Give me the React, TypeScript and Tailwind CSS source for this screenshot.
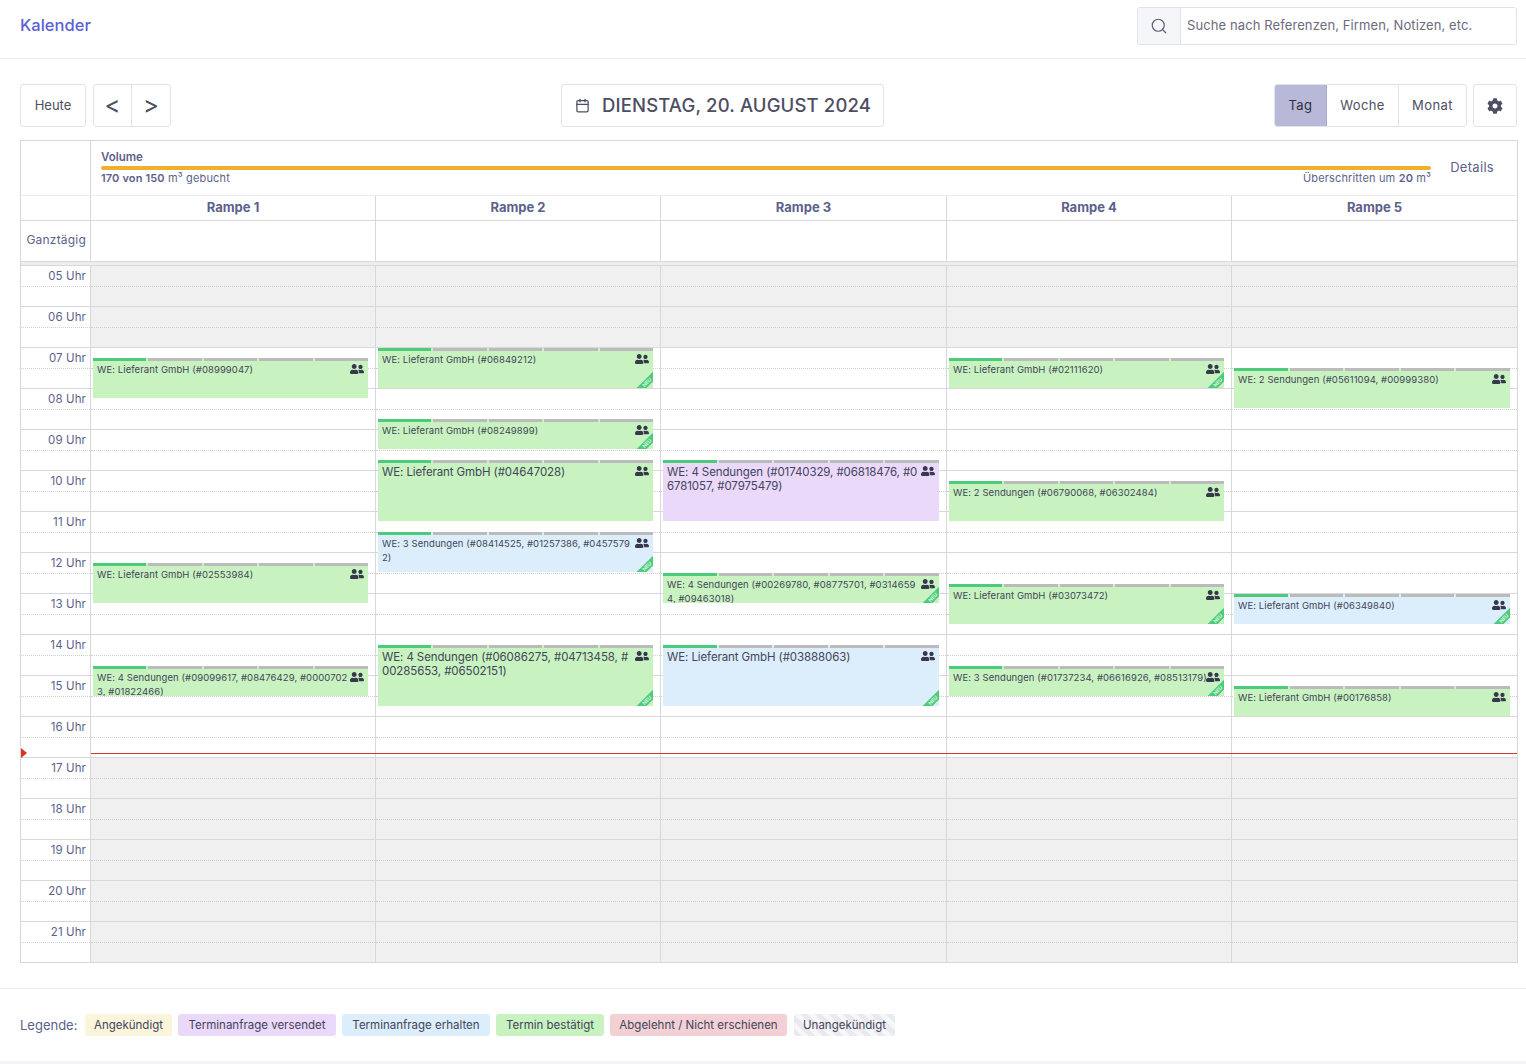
import React from 'react';
import { Calendar, Search } from 'lucide-react';
import { FaCog, FaUserFriends } from 'react-icons/fa';

type Appointment = {
    top: number;
    height: number;
    text: string;
    color: string;
    large?: boolean;
    neu?: boolean;
};

const GREEN = 'bg-[#c8f3c0]';
const BLUE = 'bg-[#dceefb]';
const PURPLE = 'bg-[#ead9fa]';

const columns: { name: string; items: Appointment[] }[] = [
    {
        name: 'Rampe 1',
        items: [
            { top: 358, height: 40, text: 'WE: Lieferant GmbH (#08999047)', color: GREEN },
            { top: 563, height: 40, text: 'WE: Lieferant GmbH (#02553984)', color: GREEN },
            { top: 666, height: 30, text: 'WE: 4 Sendungen (#09099617, #08476429, #0000702\n3, #01822466)', color: GREEN },
        ],
    },
    {
        name: 'Rampe 2',
        items: [
            { top: 348, height: 40, text: 'WE: Lieferant GmbH (#06849212)', color: GREEN, neu: true },
            { top: 419, height: 30, text: 'WE: Lieferant GmbH (#08249899)', color: GREEN, neu: true },
            { top: 460, height: 61, text: 'WE: Lieferant GmbH (#04647028)', color: GREEN, large: true },
            { top: 532, height: 40, text: 'WE: 3 Sendungen (#08414525, #01257386, #0457579\n2)', color: BLUE, neu: true },
            { top: 645, height: 61, text: 'WE: 4 Sendungen (#06086275, #04713458, #\n00285653, #06502151)', color: GREEN, large: true, neu: true },
        ],
    },
    {
        name: 'Rampe 3',
        items: [
            { top: 460, height: 61, text: 'WE: 4 Sendungen (#01740329, #06818476, #0\n6781057, #07975479)', color: PURPLE, large: true },
            { top: 573, height: 30, text: 'WE: 4 Sendungen (#00269780, #08775701, #0314659\n4, #09463018)', color: GREEN, neu: true },
            { top: 645, height: 61, text: 'WE: Lieferant GmbH (#03888063)', color: BLUE, large: true, neu: true },
        ],
    },
    {
        name: 'Rampe 4',
        items: [
            { top: 358, height: 30, text: 'WE: Lieferant GmbH (#02111620)', color: GREEN, neu: true },
            { top: 481, height: 40, text: 'WE: 2 Sendungen (#06790068, #06302484)', color: GREEN },
            { top: 584, height: 40, text: 'WE: Lieferant GmbH (#03073472)', color: GREEN, neu: true },
            { top: 666, height: 30, text: 'WE: 3 Sendungen (#01737234, #06616926, #08513179)', color: GREEN, neu: true },
        ],
    },
    {
        name: 'Rampe 5',
        items: [
            { top: 368, height: 40, text: 'WE: 2 Sendungen (#05611094, #00999380)', color: GREEN },
            { top: 594, height: 30, text: 'WE: Lieferant GmbH (#06349840)', color: BLUE, neu: true },
            { top: 686, height: 30, text: 'WE: Lieferant GmbH (#00176858)', color: GREEN },
        ],
    },
];

const hours = [5, 6, 7, 8, 9, 10, 11, 12, 13, 14, 15, 16, 17, 18, 19, 20, 21];
const GRID_TOP = 266;
const COLS = 'grid grid-cols-[70px_285px_285px_286px_285px_285px]';

const legend = [
    { label: 'Angekündigt', className: 'w-[87px] bg-[#fbf5dc]' },
    { label: 'Terminanfrage versendet', className: 'w-[158px] bg-[#ead9fa]' },
    { label: 'Terminanfrage erhalten', className: 'w-[148px] bg-[#dceefb]' },
    { label: 'Termin bestätigt', className: 'w-[108px] bg-[#c8f3c0]' },
    { label: 'Abgelehnt / Nicht erschienen', className: 'w-[177px] bg-[#f2d0d4]' },
    {
        label: 'Unangekündigt',
        className: 'w-[101px] ml-[1px] bg-[repeating-linear-gradient(45deg,#e9eaef_0px,#e9eaef_5px,#f7f7f9_5px,#f7f7f9_10px)]',
    },
];

const AppointmentCard: React.FC<{ item: Appointment }> = ({ item }) => (
    <div
        className={`absolute left-[2px] right-[7px] overflow-hidden ${item.color}`}
        style={{ top: item.top - GRID_TOP, height: item.height }}
    >
        <div className="flex gap-[2px] h-[3px]">
            <div className="flex-1 bg-[#4ccb7c]" />
            <div className="flex-1 bg-[#bbbbbb]" />
            <div className="flex-1 bg-[#bbbbbb]" />
            <div className="flex-1 bg-[#bbbbbb]" />
            <div className="flex-1 bg-[#bbbbbb]" />
        </div>
        <div
            className={
                item.large
                    ? 'pl-[4px] pt-[2px] text-[11.5px] leading-[14px] tracking-[-0.1px] text-[#44445a] whitespace-pre'
                    : 'pl-[4px] pt-[2px] text-[9.5px] leading-[14px] tracking-[0.08px] text-[#44445a] whitespace-pre'
            }
        >
            {item.text}
        </div>
        <FaUserFriends className="absolute right-[4px] top-[4px] text-[#38384c]" size={14} />
        {item.neu && (
            <div className="absolute right-0 bottom-0 w-[17px] h-[17px] overflow-hidden">
                <div className="absolute left-[-2.25px] top-[7.5px] w-[26px] h-[6.5px] bg-[#4ccb7c] -rotate-45 flex items-center justify-center text-[5px] leading-none font-semibold text-[#e6fbe8]">
                    NEU
                </div>
            </div>
        )}
    </div>
);

const App: React.FC = () => {
    return (
        <div className="min-h-screen flex flex-col bg-white font-['Inter','Liberation_Sans',sans-serif] text-[#5d5f8c]">
            <header className="h-[59px] pl-5 pr-[9px] pt-[7px] flex justify-between border-b border-[#ececf2]">
                <h1 className="pt-[8px] text-[16.5px] leading-[20px] font-medium text-[#5a5fd8]">Kalender</h1>
                <div className="w-[380px] h-[38px] flex border border-[#e2e2ea] rounded-[3px] overflow-hidden">
                    <div className="w-[43px] flex items-center justify-center bg-[#f5f6fa] border-r border-[#e2e2ea]">
                        <Search size={18} strokeWidth={1.6} className="text-[#5f6170]" />
                    </div>
                    <div className="pl-[6px] flex items-center text-[13px] tracking-[0.1px] text-[#6a6b7c]">
                        Suche nach Referenzen, Firmen, Notizen, etc.
                    </div>
                </div>
            </header>

            <div className="pl-5 pr-[9px] pt-[25px] pb-[13px] flex justify-between text-[#4d4e62]">
                <div className="flex gap-[7px]">
                    <button className="w-[66px] h-[43px] border border-[#e2e2ea] rounded-[3px] text-[13px]">Heute</button>
                    <div className="w-[78px] h-[43px] flex border border-[#e2e2ea] rounded-[3px]">
                        <button className="w-[38px] pb-[2px] border-r border-[#e2e2ea] text-[24px]">&lt;</button>
                        <button className="flex-1 pb-[2px] text-[24px]">&gt;</button>
                    </div>
                </div>
                <div className="w-[323px] h-[43px] flex items-center pl-[13px] gap-[12px] border border-[#e2e2ea] rounded-[3px]">
                    <Calendar size={15} strokeWidth={2} className="shrink-0 text-[#4d4e62]" />
                    <span className="text-[18.5px] font-medium tracking-[0.15px] whitespace-nowrap">DIENSTAG, 20. AUGUST 2024</span>
                </div>
                <div className="flex gap-[6px]">
                    <div className="w-[193px] h-[43px] flex border border-[#e2e2ea] rounded-[3px] overflow-hidden text-[13px] tracking-[0.4px]">
                        <button className="w-[52px] bg-[#b8b8d8] border-r border-[#a8a8cc] text-[#2f3040]">Tag</button>
                        <button className="w-[72px] border-r border-[#e2e2ea]">Woche</button>
                        <button className="flex-1">Monat</button>
                    </div>
                    <button className="w-[44px] h-[43px] flex items-center justify-center border border-[#e2e2ea] rounded-[3px]">
                        <FaCog size={16} />
                    </button>
                </div>
            </div>

            <div className="ml-5 mr-[8px] relative border-x border-t border-[#d8d8dc]">
                <div className="flex h-[55px] border-b border-[#ececf0]">
                    <div className="w-[70px] shrink-0 border-r border-[#d8d8dc]" />
                    <div className="flex-1 pl-[10px] pr-[23px] flex items-center">
                        <div className="flex-1">
                            <div className="text-[11.5px] leading-[14px] font-semibold">Volume</div>
                            <div className="h-[4px] mt-[2px] rounded-full bg-[#f0b02d]" />
                            <div className="flex justify-between text-[11px] leading-[16px] tracking-[0.15px]">
                                <span><b className="font-semibold">170 von 150</b> m³ gebucht</span>
                                <span>Überschritten um <b className="font-semibold">20</b> m³</span>
                            </div>
                        </div>
                        <div className="ml-[19px] text-[13px] tracking-[0.3px]">Details</div>
                    </div>
                </div>

                <div className={`${COLS} h-[25px] border-b border-[#d8d8dc]`}>
                    <div className="border-r border-[#d8d8dc]" />
                    {columns.map((col, i) => (
                        <div
                            key={col.name}
                            className={`text-center text-[13px] leading-[22px] font-bold ${i < 4 ? 'border-r border-[#d8d8dc]' : ''}`}
                        >
                            {col.name}
                        </div>
                    ))}
                </div>

                <div className={`${COLS} h-[41px] border-b border-[#d8d8dc]`}>
                    <div className="border-r border-[#d8d8dc] pr-[4px] text-right text-[12px] tracking-[0.2px] leading-[38px]">
                        Ganztägig
                    </div>
                    {columns.map((col, i) => (
                        <div key={col.name} className={i < 4 ? 'border-r border-[#d8d8dc]' : ''} />
                    ))}
                </div>
                <div className="h-[4px] bg-[#eeeeee] border-b border-[#d8d8dc]" />

                <div className={`${COLS} relative`}>
                    <div className="border-r border-[#d8d8dc]">
                        {hours.map((h) => (
                            <div key={h} className="h-[41px] border-b border-[#d8d8dc]">
                                <div className="h-[21px] border-b border-dotted border-[#cfcfd4] pr-[4px] text-right text-[11.5px] tracking-[0.1px] leading-[20px]">
                                    {String(h).padStart(2, '0')} Uhr
                                </div>
                            </div>
                        ))}
                    </div>
                    {columns.map((col, i) => (
                        <div key={col.name} className={`relative ${i < 4 ? 'border-r border-[#d8d8dc]' : ''}`}>
                            {hours.map((h) => (
                                <div key={h} className={`h-[41px] border-b border-[#d8d8dc] ${h < 7 || h > 16 ? 'bg-[#f0f0f0]' : ''}`}>
                                    <div className="h-[21px] border-b border-dotted border-[#cfcfd4]" />
                                </div>
                            ))}
                            {col.items.map((item) => (
                                <AppointmentCard key={item.top} item={item} />
                            ))}
                        </div>
                    ))}
                    <div className="absolute left-[70px] right-0 top-[487px] h-px bg-[#cf3a2a]" />
                    <div className="absolute left-0 top-[482px] w-0 h-0 border-y-[5px] border-y-transparent border-l-[6px] border-l-[#e0301e]" />
                </div>
            </div>

            <div className="mt-[25px] flex-1 px-5 pt-[25px] flex items-start gap-[6px] border-t border-[#ececf2]">
                <span className="w-[59px] text-[13px] leading-[22px]">Legende:</span>
                {legend.map((l) => (
                    <span
                        key={l.label}
                        className={`h-[22px] rounded-[3px] text-center text-[11.5px] leading-[22px] text-[#44445a] whitespace-nowrap ${l.className}`}
                    >
                        {l.label}
                    </span>
                ))}
            </div>
            <div className="h-[3px] bg-[#f3f3f8]" />
        </div>
    );
};

export default App;
